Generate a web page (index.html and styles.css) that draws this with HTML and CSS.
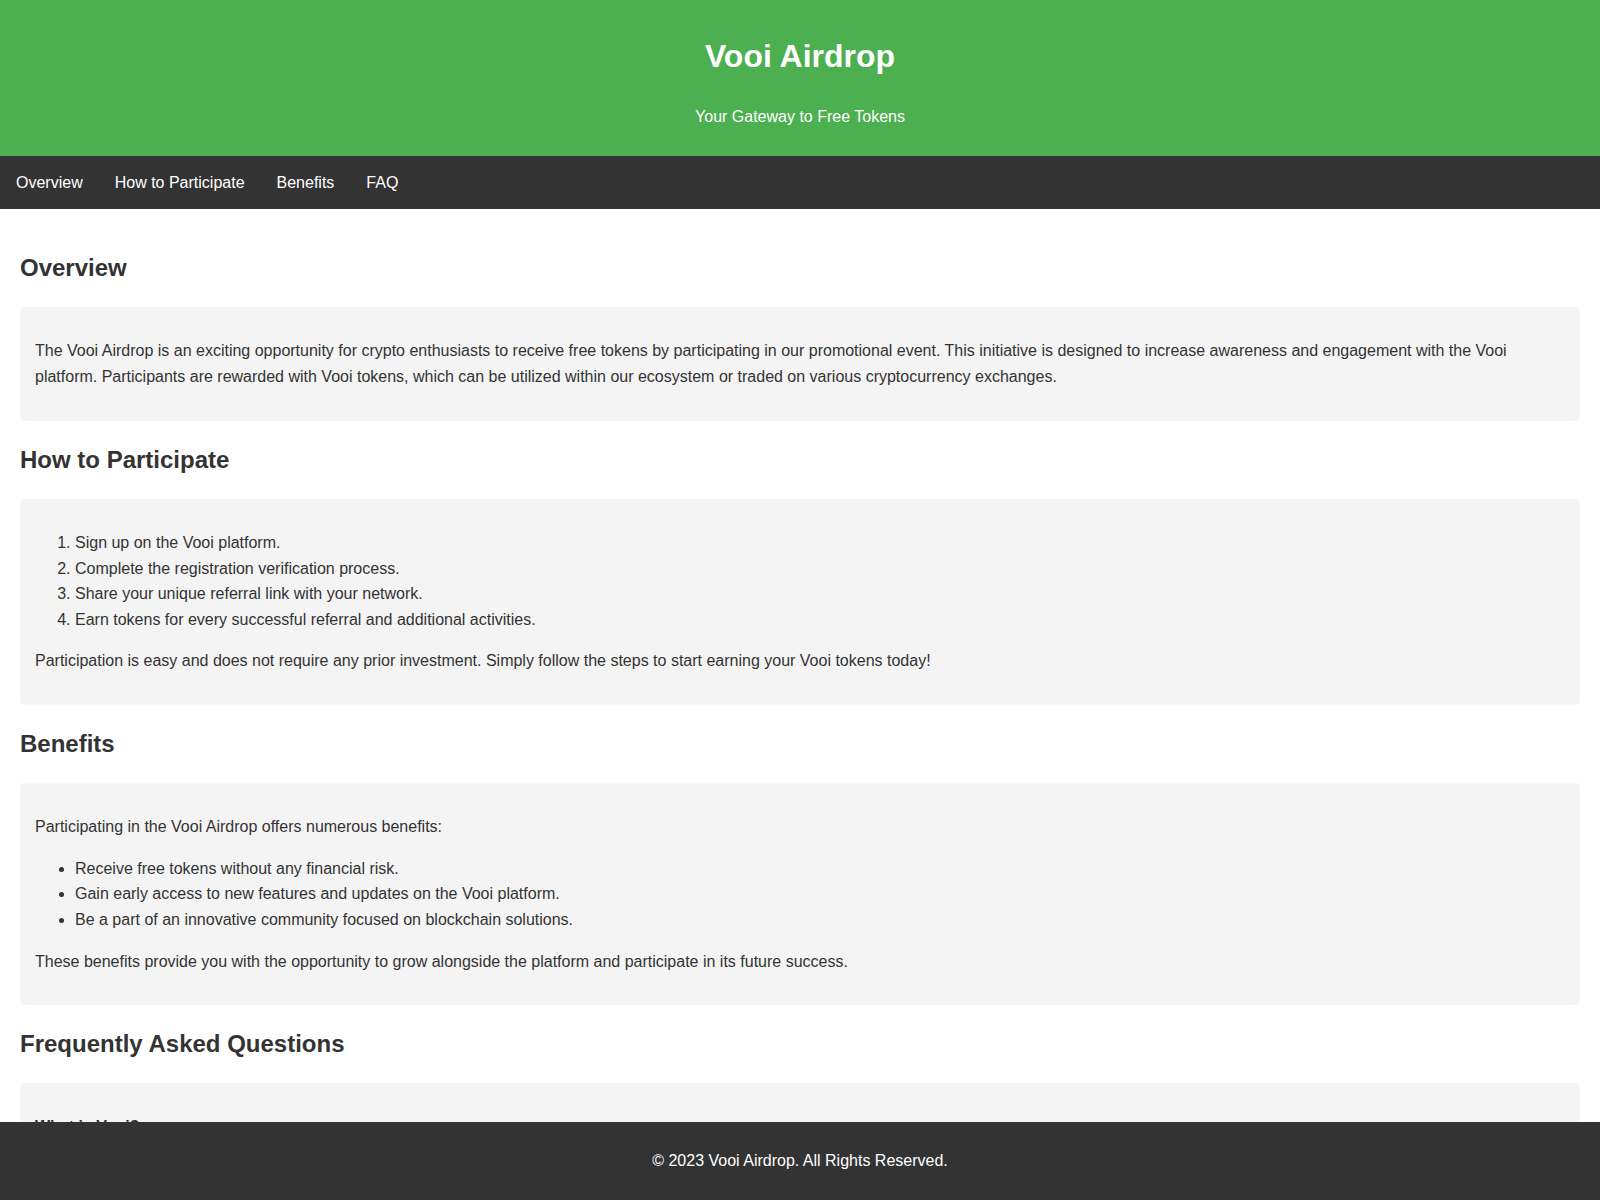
FILE: index.html
```html
<!DOCTYPE html>
<html lang="en">
<head>
<meta charset="UTF-8">
<title>Vooi Airdrop</title>
<link rel="stylesheet" href="styles.css">
</head>
<body>
<header class="site-header">
  <h1>Vooi Airdrop</h1>
  <p>Your Gateway to Free Tokens</p>
</header>
<nav class="site-nav">
  <a href="#overview">Overview</a>
  <a href="#participate">How to Participate</a>
  <a href="#benefits">Benefits</a>
  <a href="#faq">FAQ</a>
</nav>
<main class="content">
  <section id="overview">
    <h2>Overview</h2>
    <div class="card">
      <p>The Vooi Airdrop is an exciting opportunity for crypto enthusiasts to receive free tokens by participating in our promotional event. This initiative is designed to increase awareness and engagement with the Vooi platform. Participants are rewarded with Vooi tokens, which can be utilized within our ecosystem or traded on various cryptocurrency exchanges.</p>
    </div>
  </section>
  <section id="participate">
    <h2>How to Participate</h2>
    <div class="card">
      <ol>
        <li>Sign up on the Vooi platform.</li>
        <li>Complete the registration verification process.</li>
        <li>Share your unique referral link with your network.</li>
        <li>Earn tokens for every successful referral and additional activities.</li>
      </ol>
      <p>Participation is easy and does not require any prior investment. Simply follow the steps to start earning your Vooi tokens today!</p>
    </div>
  </section>
  <section id="benefits">
    <h2>Benefits</h2>
    <div class="card">
      <p>Participating in the Vooi Airdrop offers numerous benefits:</p>
      <ul>
        <li>Receive free tokens without any financial risk.</li>
        <li>Gain early access to new features and updates on the Vooi platform.</li>
        <li>Be a part of an innovative community focused on blockchain solutions.</li>
      </ul>
      <p>These benefits provide you with the opportunity to grow alongside the platform and participate in its future success.</p>
    </div>
  </section>
  <section id="faq">
    <h2>Frequently Asked Questions</h2>
    <div class="card">
      <p><strong>What is Vooi?</strong></p>
      <p>Vooi is a decentralized platform focused on providing innovative blockchain solutions.</p>
      <p><strong>How do I receive my tokens?</strong></p>
      <p>Tokens will be distributed to your registered wallet after the airdrop period ends.</p>
    </div>
  </section>
</main>
<footer class="site-footer">
  <p>&copy; 2023 Vooi Airdrop. All Rights Reserved.</p>
</footer>
</body>
</html>
```
FILE: styles.css
```css
body {
  margin: 0;
  padding: 0;
  font-family: "Liberation Sans", Arial, sans-serif;
  line-height: 1.6;
  color: #333;
  background: #fff;
}

.site-header {
  background: #4caf50;
  color: #fff;
  text-align: center;
  padding: 10px 0;
}

.site-header h1 {
  margin: 0.67em 0;
  font-size: 2em;
}

.site-nav {
  background: #333;
  display: flex;
}

.site-nav a {
  color: #fff;
  text-decoration: none;
  padding: 14px 16px;
}

.content {
  padding: 20px;
  padding-bottom: 100px;
}

.content h2 {
  font-size: 1.5em;
  margin: 0.83em 0;
}

.card {
  background: #f4f4f4;
  padding: 15px;
  border-radius: 5px;
  margin-bottom: 20px;
}

.site-footer {
  position: fixed;
  left: 0;
  right: 0;
  bottom: 0;
  background: #333;
  color: #fff;
  text-align: center;
  padding: 10px 0;
}
```
